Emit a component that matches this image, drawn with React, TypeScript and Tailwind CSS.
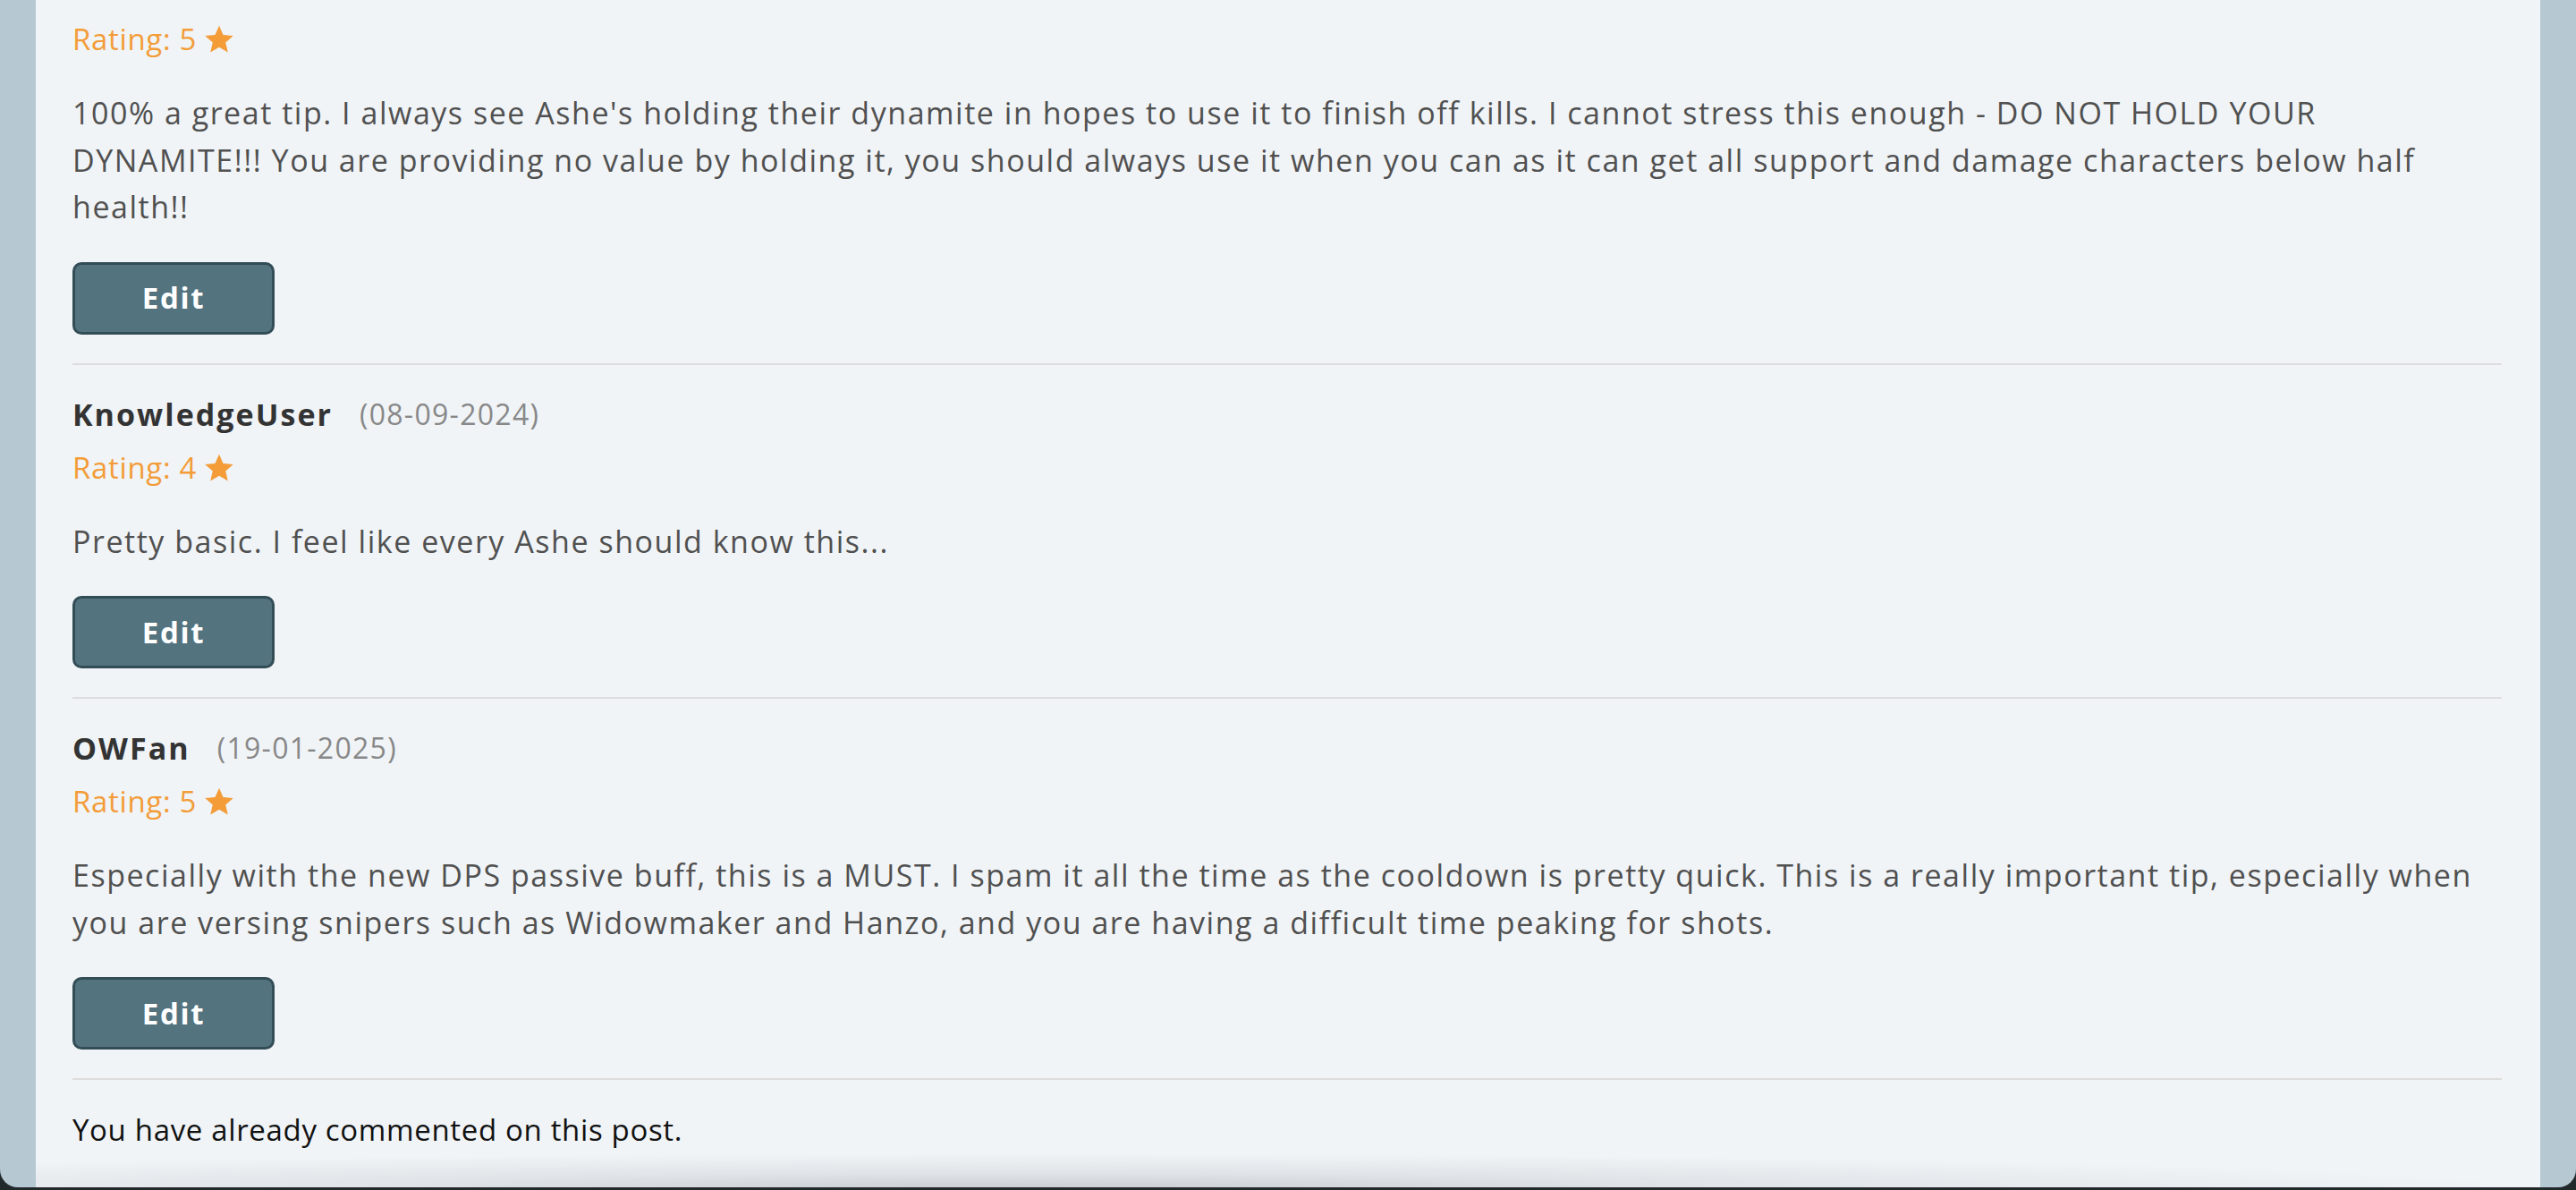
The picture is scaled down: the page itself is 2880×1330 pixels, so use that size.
const comments = [
  {
    name: "",
    date: "",
    rating: 5,
    body: "100% a great tip. I always see Ashe's holding their dynamite in hopes to use it to finish off kills. I cannot stress this enough - DO NOT HOLD YOUR DYNAMITE!!! You are providing no value by holding it, you should always use it when you can as it can get all support and damage characters below half health!!",
  },
  {
    name: "KnowledgeUser",
    date: "08-09-2024",
    rating: 4,
    body: "Pretty basic. I feel like every Ashe should know this...",
  },
  {
    name: "OWFan",
    date: "19-01-2025",
    rating: 5,
    body: "Especially with the new DPS passive buff, this is a MUST. I spam it all the time as the cooldown is pretty quick. This is a really important tip, especially when you are versing snipers such as Widowmaker and Hanzo, and you are having a difficult time peaking for shots.",
  },
];

function Star() {
  return (
    <svg width="34" height="34" viewBox="0 0 24 24" className="ml-[8px] inline-block">
      <path
        d="M12 1.2l3.2 7.3 7.9.7-6 5.3 1.8 7.8L12 18.2l-6.9 4.1 1.8-7.8-6-5.3 7.9-.7z"
        fill="#f39c38"
      />
    </svg>
  );
}

function Comment({ c, first }: { c: (typeof comments)[number]; first?: boolean }) {
  return (
    <div className={first ? "pb-[32px]" : "pt-[29px] pb-[32px]"}>
      {c.name && (
        <div className="flex items-center leading-[52px]">
          <span className="text-[34px] font-bold tracking-[0.06em] text-[#333333]">{c.name}</span>
          <span className="ml-[30px] text-[32px] tracking-[0.04em] text-[#888888]">({c.date})</span>
        </div>
      )}
      <div className={`flex items-center leading-[52px] text-[33px] tracking-[0.02em] text-[#f39c38] ${c.name ? "mt-2" : ""}`}>
        <span>Rating: {c.rating}</span>
        <Star />
      </div>
      <p className="mt-[30px] text-[34px] leading-[52.5px] tracking-[0.045em] text-[#505050]">{c.body}</p>
      <button className="mt-[35px] flex h-[81px] w-[226px] items-center justify-center rounded-[10px] border-[3px] border-[#334d57] bg-[#53737f] text-[33px] font-bold tracking-[0.05em] text-white">
        Edit
      </button>
    </div>
  );
}

export default function App() {
  return (
    <div className="h-[1330px] w-full overflow-hidden bg-[#22292b]">
      <div
        className="flex h-[1327px] flex-col overflow-hidden rounded-b-[20px] bg-[#b6c8d2]"
        style={{ fontFamily: '"Open Sans", "Liberation Sans", sans-serif' }}
      >
        <div className="h-[3px] bg-[#f1d3dd]" />
        <div className="h-px bg-[#e0c8d0]" />
        <div className="mx-[40px] flex flex-1 flex-col bg-[#f0f4f7] pl-[41px] pr-[43px] pt-[18px]">
          {comments.map((c, i) => (
            <div key={i} className={i > 0 ? "border-t-2 border-[#dddddd]" : ""}>
              <Comment c={c} first={i === 0} />
            </div>
          ))}
          <div className="border-t-2 border-[#dddddd] pt-[30px]">
            <p className="text-[33px] leading-[52px] tracking-[0.02em] text-[#111111]">
              You have already commented on this post.
            </p>
          </div>
          <div className="-mx-[41px] mt-auto h-[40px] bg-[radial-gradient(ellipse_60%_100%_at_40%_100%,#c9cdd2_0%,#e0e4e8_45%,transparent_100%)]" />
        </div>
      </div>
    </div>
  );
}
